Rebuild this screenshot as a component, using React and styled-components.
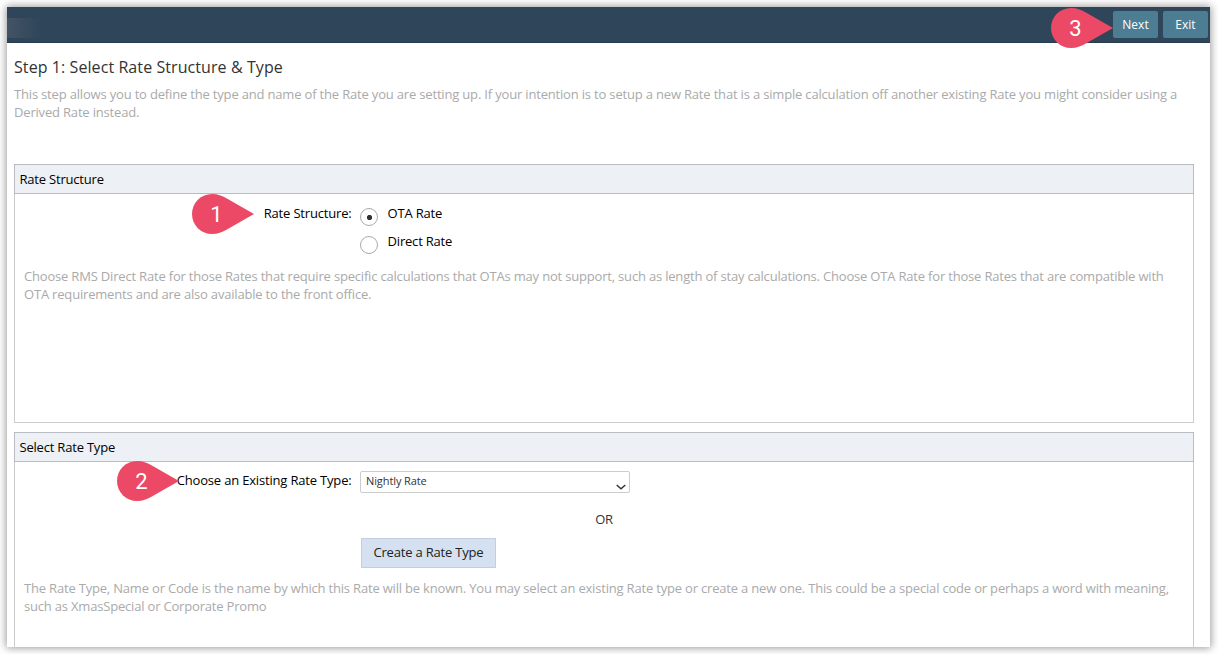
import styled, { createGlobalStyle } from "styled-components";
import { useState } from "react";

export default function App() {
  const [structure, setStructure] = useState("ota");

  return (
    <>
      <GlobalStyle />
      <StyledWindow>
        <StyledToolbar>
          <StyledToolbarFade />
          <StyledToolbarActions>
            <StyledToolbarButton>
              Next
              <Callout number="3" $left={-62} $top={-3} />
            </StyledToolbarButton>
            <StyledToolbarButton>Exit</StyledToolbarButton>
          </StyledToolbarActions>
        </StyledToolbar>

        <StyledIntro>
          <StyledTitle>Step 1: Select Rate Structure &amp; Type</StyledTitle>
          <StyledHint>
            This step allows you to define the type and name of the Rate you are
            setting up. If your intention is to setup a new Rate that is a
            simple calculation off another existing Rate you might consider
            using a
            <br />
            Derived Rate instead.
          </StyledHint>
        </StyledIntro>

        <StyledPanel $height={259}>
          <StyledPanelHeader>Rate Structure</StyledPanelHeader>
          <StyledFormRow $height={70}>
            <StyledLabel $offset={10}>
              Rate Structure:
              <Callout number="1" $left={177} $top={-10} />
            </StyledLabel>
            <StyledRadioList>
              <StyledRadioLabel>
                <StyledRadio
                  name="structure"
                  checked={structure === "ota"}
                  onChange={() => setStructure("ota")}
                />
                <span>OTA Rate</span>
              </StyledRadioLabel>
              <StyledRadioLabel>
                <StyledRadio
                  name="structure"
                  checked={structure === "direct"}
                  onChange={() => setStructure("direct")}
                />
                <span>Direct Rate</span>
              </StyledRadioLabel>
            </StyledRadioList>
          </StyledFormRow>
          <StyledPanelHint>
            Choose RMS Direct Rate for those Rates that require specific
            calculations that OTAs may not support, such as length of stay
            calculations. Choose OTA Rate for those Rates that are compatible
            with
            <br />
            OTA requirements and are also available to the front office.
          </StyledPanelHint>
        </StyledPanel>

        <StyledPanel $height={240}>
          <StyledPanelHeader>Select Rate Type</StyledPanelHeader>
          <StyledFormRow $height={114}>
            <StyledLabel $offset={9}>
              Choose an Existing Rate Type:
              <Callout number="2" $left={102} $top={-10} />
            </StyledLabel>
            <StyledTypeColumn>
              <StyledSelect>
                Nightly Rate
                <svg width="10" height="6" viewBox="0 0 10 6">
                  <path
                    d="M0.7 1 L5 4.8 L9.3 1"
                    fill="none"
                    stroke="#333"
                    strokeWidth="1.4"
                  />
                </svg>
              </StyledSelect>
              <StyledOr>OR</StyledOr>
              <StyledCreateButton>Create a Rate Type</StyledCreateButton>
            </StyledTypeColumn>
          </StyledFormRow>
          <StyledPanelHint>
            The Rate Type, Name or Code is the name by which this Rate will be
            known. You may select an existing Rate type or create a new one.
            This could be a special code or perhaps a word with meaning,
            <br />
            such as XmasSpecial or Corporate Promo
          </StyledPanelHint>
        </StyledPanel>
      </StyledWindow>
    </>
  );
}

function Callout({ number, $left, $top }) {
  return (
    <StyledCallout $left={$left} $top={$top}>
      <svg width="62" height="40" viewBox="0 0 62 40">
        <path
          d="M20 0 C26 0 30 2 34 4 L62 20 L34 36 C30 38 26 40 20 40 A20 20 0 0 1 20 0 Z"
          fill="#eb4965"
        />
      </svg>
      <StyledCalloutNumber>{number}</StyledCalloutNumber>
    </StyledCallout>
  );
}

const GlobalStyle = createGlobalStyle`
  * {
    box-sizing: border-box;
  }

  body {
    margin: 0;
    overflow: hidden;
    background-color: #fff;
    color: #000;
    font-family: "Open Sans", sans-serif;
    font-size: 13px;
    line-height: 18px;
    letter-spacing: -0.2px;
  }
`;

const StyledWindow = styled.main`
  width: 1203px;
  height: 640px;
  margin: 7px;
  background-color: #fff;
  box-shadow: 0 0 8px 1px rgba(0, 0, 0, 0.4);
`;

const StyledToolbar = styled.header`
  display: flex;
  justify-content: space-between;
  height: 36px;
  padding: 4px 2px 0 0;
  background-color: #2f455a;
  border-bottom: 1px solid #263c50;
`;

const StyledToolbarFade = styled.div`
  width: 34px;
  height: 20px;
  margin-top: 7px;
  background: linear-gradient(to right, #435464, #2f455a);
`;

const StyledToolbarActions = styled.div`
  display: flex;
  gap: 5px;
`;

const StyledToolbarButton = styled.button`
  position: relative;
  width: 45px;
  height: 27px;
  padding: 0;
  border: none;
  border-radius: 2px;
  background-color: #4c7d92;
  color: #fff;
  font: 12px/27px "Open Sans", sans-serif;
  cursor: pointer;
`;

const StyledIntro = styled.section`
  height: 121px;
  padding: 13px 7px 0;
`;

const StyledTitle = styled.h1`
  margin: 0 0 7px;
  color: #333;
  font-size: 16px;
  font-weight: 400;
  line-height: 22px;
  letter-spacing: 0.08px;
`;

const StyledHint = styled.p`
  margin: 0;
  color: #aaa;
  letter-spacing: -0.178px;
  white-space: nowrap;
`;

const StyledPanel = styled.section`
  width: 1180px;
  height: ${({ $height }) => $height}px;
  margin: 0 0 9px 7px;
  border: 1px solid #ccc;
  border-top: none;

  &:last-child {
    height: 215px;
    margin-bottom: 0;
    border-bottom: none;
  }
`;

const StyledPanelHeader = styled.h2`
  height: 30px;
  margin: 0 -1px;
  padding: 0 4.5px;
  border: 1px solid #b9bdc3;
  background-color: #edf0f5;
  font-size: 13px;
  font-weight: 400;
  line-height: 29px;
`;

const StyledFormRow = styled.div`
  display: flex;
  align-items: flex-start;
  justify-content: flex-start;
  gap: 8px;
  height: ${({ $height }) => $height}px;
`;

const StyledLabel = styled.div`
  flex: 0 0 337px;
  display: flex;
  justify-content: flex-end;
  position: relative;
  margin-top: ${({ $offset }) => $offset}px;
  padding-right: 0.5px;
  letter-spacing: -0.18px;
  white-space: nowrap;
`;

const StyledRadioList = styled.div`
  display: flex;
  flex-direction: column;
  padding-top: 10px;
`;

const StyledRadioLabel = styled.label`
  display: flex;
  gap: 9.6px;
  height: 28px;
`;

const StyledRadio = styled.input.attrs({ type: "radio" })`
  appearance: none;
  width: 18px;
  height: 18px;
  margin: 4px 0 0;
  border: 1px solid #aaa;
  border-radius: 50%;
  background-color: #fff;

  &:checked {
    background-image: radial-gradient(
      circle at 8.5px 8.5px,
      #333 2.2px,
      transparent 3px
    );
  }
`;

const StyledTypeColumn = styled.div`
  display: flex;
  flex-direction: column;
  align-items: flex-start;
  width: 488px;
  padding-top: 9px;
`;

const StyledSelect = styled.div`
  display: flex;
  justify-content: space-between;
  width: 270px;
  height: 22px;
  padding: 0 3px 0 5px;
  border: 1px solid #ccc;
  border-radius: 2px;
  color: #333;
  font-size: 11px;
  line-height: 18px;
  letter-spacing: -0.1px;

  svg {
    margin-top: 12px;
  }
`;

const StyledOr = styled.div`
  align-self: center;
  margin: 17px 0 10px;
  color: #333;
`;

const StyledCreateButton = styled.button`
  width: 135px;
  height: 30px;
  margin-left: 1px;
  padding: 0 0 2px;
  border: 1px solid #c1cfe0;
  background-color: #d5e0f0;
  color: #222;
  font: 13px/26px "Open Sans", sans-serif;
  letter-spacing: -0.19px;
  cursor: pointer;
`;

const StyledPanelHint = styled(StyledHint)`
  padding: 3px 9px 0;
  letter-spacing: -0.187px;
`;

const StyledCallout = styled.span`
  position: absolute;
  left: ${({ $left }) => $left}px;
  top: ${({ $top }) => $top}px;
  width: 62px;
  height: 40px;

  svg {
    display: block;
  }
`;

const StyledCalloutNumber = styled.span`
  position: absolute;
  top: 0;
  left: 0;
  width: 49px;
  color: #fff;
  font: 22px/41px Roboto, sans-serif;
  letter-spacing: 0;
  text-align: center;
`;
